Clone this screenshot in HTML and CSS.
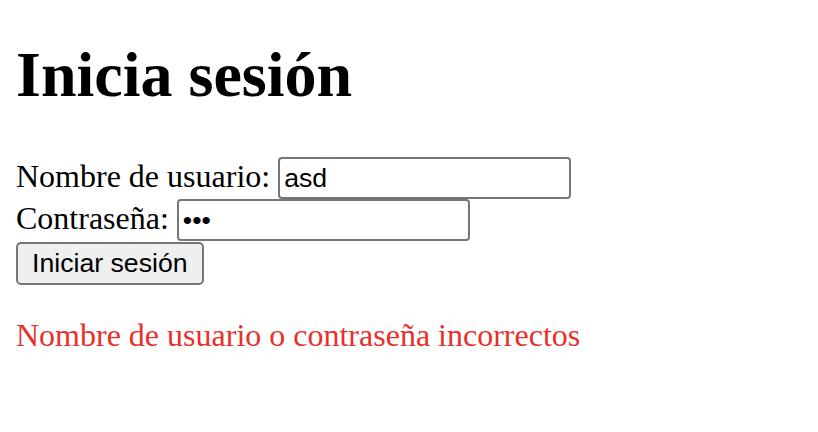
FILE: index.html
```html
<!DOCTYPE html>
<html lang="es">
<head>
<meta charset="utf-8">
<title>Inicia sesión</title>
<link rel="stylesheet" href="styles.css">
</head>
<body class="page">
<h1 class="title">Inicia sesión</h1>
<form class="login">
<label class="label" for="u">Nombre de usuario:</label> <input class="field" id="u" type="text" value="asd"><br>
<label class="label" for="p">Contraseña:</label> <input class="field" id="p" type="password" value="asd"><br>
<button class="btn" type="button">Iniciar sesión</button>
</form>
<p class="error">Nombre de usuario o contraseña incorrectos</p>
</body>
</html>
```
FILE: styles.css
```css
html { background: #fff; }
.page {
  margin: 16px;
  font-family: "Liberation Serif", "Times New Roman", serif;
  font-size: 32px;
  color: #000;
}
.title {
  font-size: 64px;
  font-weight: bold;
  margin: 22px 0 45px;
}
.login { margin: 0; }
.field {
  font-family: "Liberation Sans", Arial, sans-serif;
  font-size: 26.67px;
  width: 281px;
  padding: 3.5px 4px;
  border: 2px solid #767676;
  border-radius: 4px;
  margin: 0;
  color: #000;
  background: #fff;
  box-sizing: content-box;
  vertical-align: baseline;
}
.btn {
  font-family: "Liberation Sans", Arial, sans-serif;
  font-size: 26.67px;
  padding: 4px 14px;
  margin-top: 1px;
  border: 2px solid #767676;
  border-radius: 5px;
  background: #efefef;
  color: #000;
}
.error {
  color: #e8302a;
  margin: 32px 0;
}
```
